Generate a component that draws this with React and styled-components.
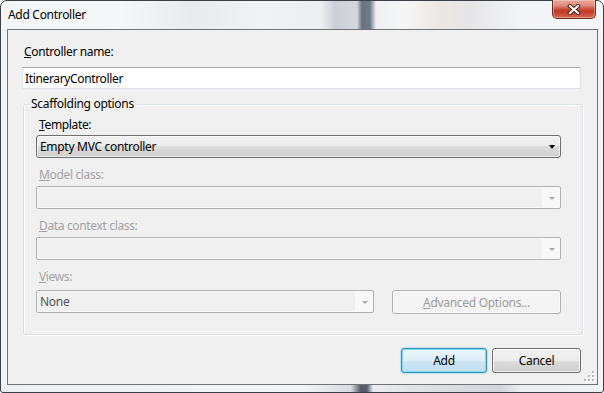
import React from "react";
import styled, { createGlobalStyle } from "styled-components";

const GlobalStyle = createGlobalStyle`
  html, body {
    margin: 0;
    padding: 0;
    background: #ffffff;
  }
  body {
    font-family: "Noto Sans", "Open Sans", sans-serif;
    font-size: 12px;
    color: #000;
  }
  * {
    box-sizing: border-box;
  }
`;

const Window = styled.div`
  width: 604px;
  height: 393px;
  border: 1px solid #3b4047;
  border-radius: 7px 7px 3px 3px;
  display: flex;
  flex-direction: column;
  padding: 0 5px 7px 6px;
  background:
    linear-gradient(
        90deg,
        #f4f5f7 0px,
        #f6f7f8 120px,
        #e9eaec 190px,
        #f1f2f4 260px,
        #eceef0 320px,
        #ccd0d6 334px,
        #d4d7dc 356px,
        #66727f 361px,
        #707b88 369px,
        #eef0f2 375px,
        #f6f6f6 405px,
        #ebe7e3 440px,
        #e6e6e8 470px,
        #f3f4f6 520px,
        #f5f6f8 100%
      )
      top / 100% 29px no-repeat,
    linear-gradient(
        90deg,
        #eef0f2 0px,
        #f3f4f6 300px,
        #d8dbe0 350px,
        #4f5a66 360px,
        #56616d 366px,
        #e9ebee 372px,
        #dcdee2 440px,
        #d2d5d9 500px,
        #eceef0 520px,
        #f0f2f4 100%
      )
      bottom / 100% 8px no-repeat,
    #f1f3f6;
`;

const TitleBar = styled.div`
  height: 28px;
  display: flex;
  align-items: flex-start;
  justify-content: space-between;
`;

const Title = styled.div`
  margin: 6px 0 0 1px;
  line-height: 16px;
  color: #000;
  letter-spacing: -0.3px;
`;

const CloseButton = styled.div`
  width: 44px;
  height: 19px;
  margin: -1px 2px 0 0;
  border: 1px solid #6a2a20;
  border-top: none;
  border-radius: 0 0 5px 5px;
  background: linear-gradient(
    #e9a89b 0%,
    #e08d7c 30%,
    #c94a35 52%,
    #c23a25 65%,
    #d46a54 100%
  );
  box-shadow: inset 0 0 0 1px rgba(255, 220, 210, 0.45);
  display: flex;
  align-items: center;
  justify-content: center;
`;

const Client = styled.div`
  flex: 1;
  position: relative;
  border: 1px solid #6f7378;
  background: #f0f0f0;
  display: flex;
  flex-direction: column;
  padding: 14px 16px 11px 14px;
`;

const Label = styled.div`
  line-height: 16px;
  height: 16px;
  padding-left: ${(p) => p.$indent || 2}px;
  margin-top: ${(p) => p.$top || 0}px;
  color: ${(p) => (p.$disabled ? "#a3a3a3" : "#000")};
  letter-spacing: -0.35px;
  white-space: nowrap;
`;

const TextBox = styled.div`
  margin-top: 7px;
  height: 22px;
  background: #fff;
  border: 1px solid #dbdfe6;
  border-top-color: #abadb3;
  border-left-color: #e2e3ea;
  display: flex;
  align-items: center;
  padding-left: 2px;
  letter-spacing: -0.35px;
`;

const Group = styled.fieldset`
  margin: 7px -2px 0 1px;
  padding: 5px 21px 20px 12px;
  border: 1px solid #d5dfe5;
  border-radius: 3px;
  box-shadow: inset 1px 1px 0 #ffffff, 1px 1px 0 #ffffff;
  min-width: 0;
  display: flex;
  flex-direction: column;
`;

const Legend = styled.legend`
  margin-left: -6px;
  padding: 0 1px;
  line-height: 16px;
  letter-spacing: -0.3px;
`;

const Combo = styled.div`
  margin-top: ${(p) => p.$top || 0}px;
  height: 23px;
  width: ${(p) => (p.$width ? `${p.$width}px` : "auto")};
  border: 1px solid ${(p) => (p.$disabled ? "#adb2b5" : "#707070")};
  border-radius: ${(p) => (p.$disabled ? 2 : 3)}px;
  background: ${(p) =>
    p.$disabled
      ? "linear-gradient(90deg, #f0f0f0 0, #f0f0f0 calc(100% - 18px), #f8f8f8 calc(100% - 18px))"
      : "linear-gradient(#f2f2f2 0%, #ebebeb 50%, #dddddd 50%, #cfcfcf 100%)"};
  box-shadow: inset 0 0 0 1px
    ${(p) => (p.$disabled ? "#f9f9f9" : "rgba(255,255,255,0.6)")};
  display: flex;
  align-items: center;
  justify-content: space-between;
  padding: 0 5px 0 3px;
  letter-spacing: -0.3px;
  color: ${(p) => p.$color || "#000"};
`;

const Arrow = styled.span`
  width: 0;
  height: 0;
  border-left: ${(p) => (p.$disabled ? 3 : 3.5)}px solid transparent;
  border-right: ${(p) => (p.$disabled ? 3 : 3.5)}px solid transparent;
  border-top: ${(p) => (p.$disabled ? 3 : 4)}px solid
    ${(p) => (p.$disabled ? "#a8a8a8" : "#000")};
  margin-top: 1px;
`;

const ViewsRow = styled.div`
  margin-top: 5px;
  display: flex;
  justify-content: space-between;
`;

const PushButton = styled.div`
  width: ${(p) => p.$width}px;
  height: ${(p) => p.$height || 25}px;
  border-radius: 3px;
  display: flex;
  align-items: center;
  justify-content: center;
  letter-spacing: -0.3px;
  border: 1px solid
    ${(p) => (p.$disabled ? "#adb2b5" : p.$default ? "#3c8fb1" : "#707070")};
  color: ${(p) => (p.$disabled ? "#9c9c9c" : "#000")};
  background: ${(p) =>
    p.$disabled
      ? "#f4f4f4"
      : p.$default
      ? "linear-gradient(#eaf6fc 0%, #dcedf7 50%, #cce5f3 50%, #c2def0 100%)"
      : "linear-gradient(#f2f2f2 0%, #ebebeb 50%, #dddddd 50%, #cfcfcf 100%)"};
  box-shadow: ${(p) =>
    p.$disabled
      ? "inset 0 0 0 1px #fbfbfb"
      : p.$default
      ? "inset 0 0 0 1px #7fdcf6, 0 0 1px 1px rgba(90, 200, 240, 0.35)"
      : "inset 0 0 0 1px rgba(255,255,255,0.7)"};
`;

const ButtonRow = styled.div`
  margin-top: auto;
  display: flex;
  justify-content: flex-end;
  gap: 5px;
`;

const Grip = styled.svg`
  position: absolute;
  right: 2px;
  bottom: 2px;
`;

const CloseGlyph = () => (
  <svg width="14" height="11" viewBox="0 0 14 11">
    <path
      d="M3 2 L11 9 M11 2 L3 9"
      stroke="#4a1a12"
      strokeWidth="4"
      strokeLinecap="square"
      fill="none"
    />
    <path
      d="M3 2 L11 9 M11 2 L3 9"
      stroke="#ffffff"
      strokeWidth="2.2"
      strokeLinecap="square"
      fill="none"
    />
  </svg>
);

const GripGlyph = () => {
  const dots = [
    [8, 0],
    [4, 4],
    [8, 4],
    [0, 8],
    [4, 8],
    [8, 8],
  ];
  return (
    <Grip width="11" height="11" viewBox="0 0 11 11">
      {dots.map(([x, y]) => (
        <g key={`${x}-${y}`}>
          <rect x={x + 1} y={y + 1} width="2" height="2" fill="#ffffff" />
          <rect x={x} y={y} width="2" height="2" fill="#b8bcc2" />
        </g>
      ))}
    </Grip>
  );
};

const App = () => {
  return (
    <>
      <GlobalStyle />
      <Window>
        <TitleBar>
          <Title>Add Controller</Title>
          <CloseButton>
            <CloseGlyph />
          </CloseButton>
        </TitleBar>
        <Client>
          <Label>
            <u>C</u>ontroller name:
          </Label>
          <TextBox>ItineraryController</TextBox>
          <Group>
            <Legend>Scaffolding options</Legend>
            <Label $indent={3}>
              <u>T</u>emplate:
            </Label>
            <Combo $top={2}>
              <span>Empty MVC controller</span>
              <Arrow />
            </Combo>
            <Label $indent={3} $top={9} $disabled>
              <u>M</u>odel class:
            </Label>
            <Combo $top={3} $disabled>
              <span />
              <Arrow $disabled />
            </Combo>
            <Label $indent={3} $top={9} $disabled>
              <u>D</u>ata context class:
            </Label>
            <Combo $top={3} $disabled>
              <span />
              <Arrow $disabled />
            </Combo>
            <Label $indent={3} $top={9} $disabled>
              <u>V</u>iews:
            </Label>
            <ViewsRow>
              <Combo $disabled $width={338} $color="#555555">
                <span>None</span>
                <Arrow $disabled />
              </Combo>
              <PushButton $disabled $width={169} $height={24}>
                <span>
                  <u>A</u>dvanced Options...
                </span>
              </PushButton>
            </ViewsRow>
          </Group>
          <ButtonRow>
            <PushButton $default $width={86}>
              Add
            </PushButton>
            <PushButton $width={89}>Cancel</PushButton>
          </ButtonRow>
          <GripGlyph />
        </Client>
      </Window>
    </>
  );
};

export default App;
